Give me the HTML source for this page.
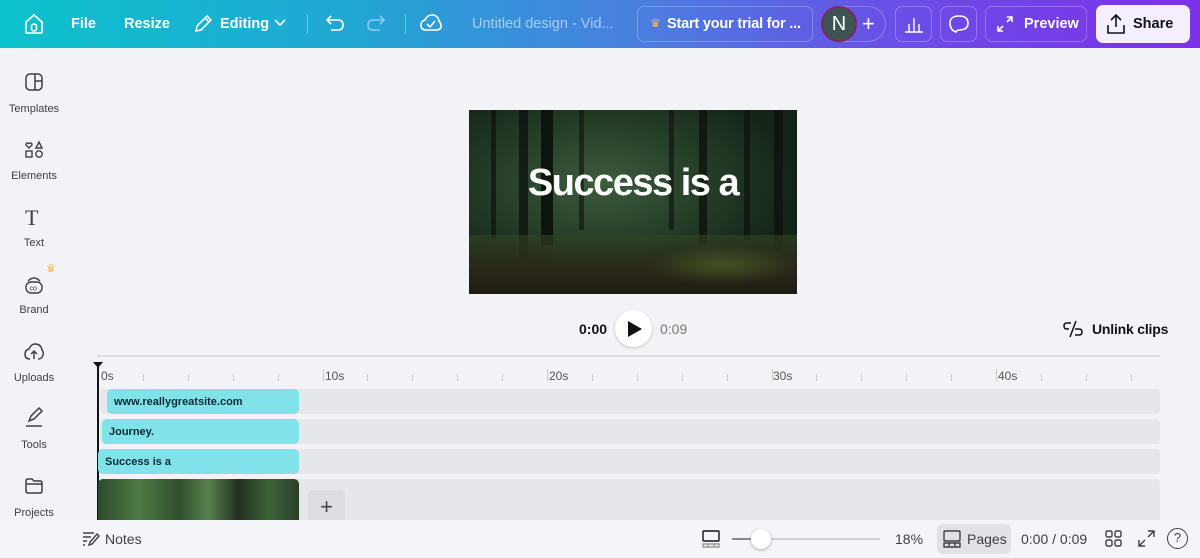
<!DOCTYPE html>
<html><head><meta charset="utf-8"><style>
*{margin:0;padding:0;box-sizing:border-box}
body{width:1200px;height:558px;overflow:hidden;background:#f2f3f7;font-family:"Liberation Sans",sans-serif;position:relative;color:#0e1318}
.a{position:absolute}
.hdr{left:0;top:0;width:1200px;height:48px;background:linear-gradient(90deg,#0cc2cb 0%,#22a6d4 30%,#4d7be0 55%,#6a4ee6 75%,#7d30ea 100%)}
.ht{color:#fff;font-weight:bold;font-size:14.5px;top:16px}
.hb{top:6px;height:36px;border:1px solid rgba(255,255,255,.25);border-radius:7px}
.side{left:0;top:48px;width:68px;height:510px;background:#f2f3f7}
.si{width:68px;text-align:center;font-size:11px;color:#3c4046}
.tick{width:1px;height:7px;background:#c5c8ce;top:374px}
.lab{top:369px;font-size:12px;color:#555}
.track{left:100px;width:1060px;height:25px;background:#e6e7eb;border-radius:4px}
.clip{height:25px;background:#7fe3e9;border-radius:5px;font-size:11px;font-weight:bold;color:#0e2a36;padding:7px 0 0 7px}
.tr{position:absolute;top:0;background:#0d130d}
</style></head><body>
<div class="a hdr"></div>
<svg class="a" style="left:24px;top:13px" width="20" height="22" viewBox="0 0 20 22" fill="none" stroke="#fff" stroke-width="1.6"><path d="M2 9 L10 2 L18 9 V19 Q18 20 17 20 H3 Q2 20 2 19Z"/><rect x="7.5" y="11" width="5" height="7" rx="2.5"/></svg>
<div class="a ht" style="left:71px">File</div>
<div class="a ht" style="left:124px">Resize</div>
<svg class="a" style="left:193px;top:14px" width="20" height="20" viewBox="0 0 20 20" fill="none" stroke="#fff" stroke-width="1.6"><path d="M3 17 L4 12 L14 2 L18 6 L8 16Z M12 4 L16 8"/></svg>
<div class="a ht" style="left:220px">Editing</div>
<svg class="a" style="left:274px;top:19px" width="12" height="8" viewBox="0 0 12 8" fill="none" stroke="#fff" stroke-width="1.6"><path d="M1 1 L6 6 L11 1"/></svg>
<div class="a" style="left:307px;top:14px;width:1px;height:20px;background:rgba(255,255,255,.35)"></div>
<svg class="a" style="left:325px;top:14px" width="20" height="18" viewBox="0 0 20 18" fill="none" stroke="#fff" stroke-width="1.6"><path d="M6 2 L2 6 L6 10 M2 6 H13 Q18 6 18 11 Q18 16 13 16 H6"/></svg>
<svg class="a" style="left:366px;top:14px" width="20" height="18" viewBox="0 0 20 18" fill="none" stroke="rgba(255,255,255,.45)" stroke-width="1.6"><path d="M14 2 L18 6 L14 10 M18 6 H7 Q2 6 2 11 Q2 16 7 16 H14"/></svg>
<div class="a" style="left:405px;top:14px;width:1px;height:20px;background:rgba(255,255,255,.35)"></div>
<svg class="a" style="left:420px;top:13px" width="22" height="20" viewBox="0 0 22 20" fill="none" stroke="#fff" stroke-width="1.6"><path d="M6 17 Q1 17 1 12 Q1 8 5 7 Q7 2 12 2 Q18 2 19 8 Q21 10 21 13 Q21 17 16 17Z M7 11 L10 14 L15 8"/></svg>
<div class="a ht" style="left:472px;font-weight:normal;color:rgba(255,255,255,.55)">Untitled design - Vid...</div>
<div class="a hb" style="left:637px;width:176px"></div>
<div class="a" style="left:650px;top:16px;color:#f5b73c;font-size:12px">♛</div>
<div class="a ht" style="left:667px;letter-spacing:-.2px">Start your trial for ...</div>
<div class="a hb" style="left:822px;width:64px;border-radius:18px"></div>
<div class="a" style="left:821px;top:6px;width:36px;height:36px;border-radius:50%;background:#3f5555;border:2px solid #7a2a5a;color:#fff;font-size:20px;text-align:center;line-height:32px">N</div>
<div class="a" style="left:862px;top:11px;color:#fff;font-size:22px">+</div>
<div class="a hb" style="left:895px;width:37px"></div>
<svg class="a" style="left:904px;top:15px" width="20" height="18" viewBox="0 0 20 18" fill="none" stroke="#fff" stroke-width="1.4"><path d="M1 17 H19 M5 17 V9 M10 17 V3 M15 17 V9"/></svg>
<div class="a hb" style="left:940px;width:37px"></div>
<svg class="a" style="left:948px;top:13px" width="22" height="22" viewBox="0 0 22 22" fill="none" stroke="#fff" stroke-width="1.6"><path d="M8 19 Q2 17 2 10 Q2 3 11 3 Q20 3 20 10 Q20 17 11 17 Q9 17 8 19Z"/></svg>
<div class="a hb" style="left:985px;width:102px"></div>
<svg class="a" style="left:996px;top:15px" width="18" height="18" viewBox="0 0 18 18" fill="none" stroke="#fff" stroke-width="1.6"><path d="M11 2 H16 V7 M16 2 L11 7 M2 11 V16 H7 M2 16 L7 11"/></svg>
<div class="a ht" style="left:1024px">Preview</div>
<div class="a" style="left:1096px;top:5px;width:94px;height:38px;background:#f5eefc;border-radius:7px"></div>
<svg class="a" style="left:1106px;top:13px" width="20" height="22" viewBox="0 0 20 22" fill="none" stroke="#0e1318" stroke-width="1.6"><path d="M10 14 V2 M5 7 L10 2 L15 7 M2 12 V20 H18 V12"/></svg>
<div class="a ht" style="left:1133px;color:#0e1318">Share</div>

<div class="a side"></div>
<svg class="a" style="left:24px;top:72px" width="20" height="20" viewBox="0 0 20 20" fill="none" stroke="#3c4046" stroke-width="1.5"><rect x="2" y="2" width="16" height="16" rx="4"/><path d="M11 2 V18 M11 9 H18"/></svg>
<div class="a si" style="top:103px">Templates</div>
<svg class="a" style="left:24px;top:140px" width="20" height="20" viewBox="0 0 20 20" fill="none" stroke="#3c4046" stroke-width="1.4"><path d="M5 8 L2 5 Q2 2 5 3.5 Q8 2 8 5Z M12 8 L15 2 L18 8Z"/><rect x="2" y="11" width="6" height="6"/><circle cx="15" cy="14" r="3.2"/></svg>
<div class="a si" style="top:170px">Elements</div>
<div class="a" style="left:25px;top:205px;font-family:'Liberation Serif',serif;font-size:22px;color:#3c4046">T</div>
<div class="a si" style="top:237px">Text</div>
<div class="a" style="left:46px;top:262px;color:#f5b73c;font-size:11px">♛</div>
<svg class="a" style="left:23px;top:274px" width="22" height="22" viewBox="0 0 22 22" fill="none" stroke="#3c4046" stroke-width="1.4"><path d="M5 7 Q11 1 17 7"/><rect x="3" y="8" width="16" height="11" rx="5"/><text x="6.5" y="16.5" font-size="7" fill="#3c4046" stroke="none" font-family="Liberation Sans">co</text></svg>
<div class="a si" style="top:304px">Brand</div>
<svg class="a" style="left:23px;top:342px" width="22" height="20" viewBox="0 0 22 20" fill="none" stroke="#3c4046" stroke-width="1.5"><path d="M7 17 Q2 17 2 12 Q2 8 6 7 Q8 2 12 2 Q18 2 19 8 Q21 10 20 13 Q19 17 15 17 M11 17 V9 M8 12 L11 9 L14 12"/></svg>
<div class="a si" style="top:372px">Uploads</div>
<svg class="a" style="left:23px;top:407px" width="22" height="22" viewBox="0 0 22 22" fill="none" stroke="#3c4046" stroke-width="1.5"><path d="M6 14 L8 9 L16 1 L19 4 L11 12Z M3 19 H19"/></svg>
<div class="a si" style="top:439px">Tools</div>
<svg class="a" style="left:24px;top:477px" width="20" height="18" viewBox="0 0 20 18" fill="none" stroke="#3c4046" stroke-width="1.5"><path d="M2 4 Q2 2 4 2 H8 L10 4 H16 Q18 4 18 6 V14 Q18 16 16 16 H4 Q2 16 2 14Z M2 7 H18"/></svg>
<div class="a si" style="top:507px">Projects</div>
<div class="a" style="left:25px;top:545px;width:18px;height:8px;border:1px solid #ccc;border-radius:2px"></div>

<div class="a" style="left:469px;top:110px;width:328px;height:184px;background:radial-gradient(ellipse at 40% 40%,#3d5c3e 0%,#26402a 35%,#162418 70%),#1a261b;overflow:hidden">
<div class="tr" style="left:22px;width:5px;height:130px;opacity:.7"></div>
<div class="tr" style="left:50px;width:9px;height:150px;opacity:.8"></div>
<div class="tr" style="left:72px;width:12px;height:135px"></div>
<div class="tr" style="left:110px;width:5px;height:120px;opacity:.6"></div>
<div class="tr" style="left:200px;width:5px;height:120px;opacity:.6"></div>
<div class="tr" style="left:230px;width:8px;height:135px;opacity:.8"></div>
<div class="tr" style="left:275px;width:6px;height:130px;opacity:.7"></div>
<div class="tr" style="left:305px;width:9px;height:140px;opacity:.8"></div>
<div class="a" style="left:0;top:125px;width:328px;height:59px;background:linear-gradient(180deg,rgba(50,70,35,.6),#2a2719 60%,#1e1c14)"></div>
<div class="a" style="left:180px;top:135px;width:148px;height:40px;background:radial-gradient(ellipse,rgba(90,120,40,.5),transparent 70%)"></div>
<div class="a" style="left:0;top:52px;width:328px;text-align:center;color:#fff;font-weight:bold;font-size:38px;letter-spacing:-1.5px">Success is a</div>
</div>

<div class="a" style="left:579px;top:321px;font-weight:bold;font-size:14px">0:00</div>
<div class="a" style="left:615px;top:310px;width:37px;height:37px;border-radius:50%;background:#fff;box-shadow:0 1px 3px rgba(0,0,0,.2)"></div>
<svg class="a" style="left:627px;top:320px" width="16" height="18" viewBox="0 0 16 18"><path d="M1 1 L15 9 L1 17Z" fill="#0e1318"/></svg>
<div class="a" style="left:660px;top:321px;font-size:14px;color:#777">0:09</div>
<svg class="a" style="left:1062px;top:319px" width="22" height="20" viewBox="0 0 22 20" fill="none" stroke="#0e1318" stroke-width="1.5"><path d="M9 4 H5 Q2 4 2 7 Q2 10 5 10 H7 M13 10 H17 Q20 10 20 13 Q20 16 17 16 H13 M8 18 L14 2"/></svg>
<div class="a" style="left:1092px;top:321px;font-weight:bold;font-size:14px;letter-spacing:-.2px">Unlink clips</div>

<div class="a" style="left:97px;top:355px;width:1063px;height:2px;background:#dcdee3"></div>
<div class="a" style="left:93px;top:362px;width:0;height:0;border-left:5px solid transparent;border-right:5px solid transparent;border-top:6px solid #0e1318"></div>
<div class="a" style="left:97px;top:366px;width:2px;height:154px;background:#0e1318"></div>
<div class="a lab" style="left:101px">0s</div>
<div class="a lab" style="left:325px">10s</div>
<div class="a lab" style="left:549px">20s</div>
<div class="a lab" style="left:773px">30s</div>
<div class="a lab" style="left:998px">40s</div>
<div class="a tick" style="left:143px"></div><div class="a tick" style="left:188px"></div><div class="a tick" style="left:233px"></div><div class="a tick" style="left:278px"></div><div class="a tick" style="left:323px;height:12px;top:369px"></div>
<div class="a tick" style="left:367px"></div><div class="a tick" style="left:412px"></div><div class="a tick" style="left:457px"></div><div class="a tick" style="left:502px"></div><div class="a tick" style="left:547px;height:12px;top:369px"></div>
<div class="a tick" style="left:592px"></div><div class="a tick" style="left:637px"></div><div class="a tick" style="left:682px"></div><div class="a tick" style="left:727px"></div><div class="a tick" style="left:772px;height:12px;top:369px"></div>
<div class="a tick" style="left:816px"></div><div class="a tick" style="left:861px"></div><div class="a tick" style="left:906px"></div><div class="a tick" style="left:951px"></div><div class="a tick" style="left:996px;height:12px;top:369px"></div>
<div class="a tick" style="left:1041px"></div><div class="a tick" style="left:1086px"></div><div class="a tick" style="left:1131px"></div>

<div class="a track" style="top:389px"></div>
<div class="a track" style="top:419px"></div>
<div class="a track" style="top:449px"></div>
<div class="a track" style="top:479px;height:41px;border-radius:4px 4px 0 0"></div>
<div class="a clip" style="left:107px;top:389px;width:192px">www.reallygreatsite.com</div>
<div class="a clip" style="left:102px;top:419px;width:197px">Journey.</div>
<div class="a clip" style="left:98px;top:449px;width:201px">Success is a</div>
<div class="a" style="left:98px;top:479px;width:201px;height:41px;border-radius:5px 5px 0 0;background:linear-gradient(90deg,#2c4a2c,#4f7a45 20%,#2f4f2c 40%,#5a8050 55%,#20301f 70%,#3d6238 85%,#2a4028)"></div>
<div class="a" style="left:308px;top:490px;width:37px;height:30px;background:#dcdde2;border-radius:5px 5px 0 0;text-align:center;font-size:22px;color:#444;line-height:34px">+</div>

<div class="a" style="left:0;top:520px;width:1200px;height:38px;background:#f4f5f8"></div>
<svg class="a" style="left:82px;top:531px" width="18" height="16" viewBox="0 0 18 16" fill="none" stroke="#3c4046" stroke-width="1.4"><path d="M1 2 H12 M1 6 H9 M1 10 H5 M1 14 H3 M7 14 L8 11 L15 3 L17 5 L10 13Z"/></svg>
<div class="a" style="left:105px;top:531px;font-size:14px;color:#3c4046">Notes</div>
<svg class="a" style="left:702px;top:530px" width="18" height="18" viewBox="0 0 18 18" fill="none" stroke="#0e1318" stroke-width="1.4"><rect x="1" y="1" width="16" height="10" rx="1"/><path d="M1 14 H17 V17 H1Z M6 14 V17 M12 14 V17" stroke="#999"/></svg>
<div class="a" style="left:732px;top:538px;width:148px;height:2px;background:#cfd1d6"></div>
<div class="a" style="left:732px;top:538px;width:28px;height:2px;background:#888"></div>
<div class="a" style="left:751px;top:529px;width:20px;height:20px;border-radius:50%;background:#fff;box-shadow:0 1px 3px rgba(0,0,0,.3)"></div>
<div class="a" style="left:895px;top:531px;font-size:14px;color:#3c4046">18%</div>
<div class="a" style="left:937px;top:524px;width:74px;height:30px;background:#e1e2e7;border-radius:6px"></div>
<svg class="a" style="left:943px;top:530px" width="18" height="18" viewBox="0 0 18 18" fill="none" stroke="#3c4046" stroke-width="1.4"><rect x="1" y="1" width="16" height="10" rx="1"/><path d="M1 13 H17 V17 H1Z M6 13 V17 M12 13 V17"/></svg>
<div class="a" style="left:967px;top:531px;font-size:14px;color:#3c4046">Pages</div>
<div class="a" style="left:1021px;top:531px;font-size:14px;color:#3c4046">0:00 / 0:09</div>
<svg class="a" style="left:1105px;top:530px" width="17" height="17" viewBox="0 0 17 17" fill="none" stroke="#3c4046" stroke-width="1.4"><rect x="1" y="1" width="6" height="6" rx="1.5"/><rect x="10" y="1" width="6" height="6" rx="1.5"/><rect x="1" y="10" width="6" height="6" rx="1.5"/><rect x="10" y="10" width="6" height="6" rx="1.5"/></svg>
<svg class="a" style="left:1138px;top:530px" width="17" height="17" viewBox="0 0 17 17" fill="none" stroke="#3c4046" stroke-width="1.4"><path d="M10 1 H16 V7 M16 1 L10 7 M1 10 V16 H7 M1 16 L7 10"/></svg>
<div class="a" style="left:1167px;top:528px;width:21px;height:21px;border-radius:50%;border:1.5px solid #3c4046;text-align:center;font-size:13px;line-height:18px;color:#3c4046">?</div>
</body></html>
